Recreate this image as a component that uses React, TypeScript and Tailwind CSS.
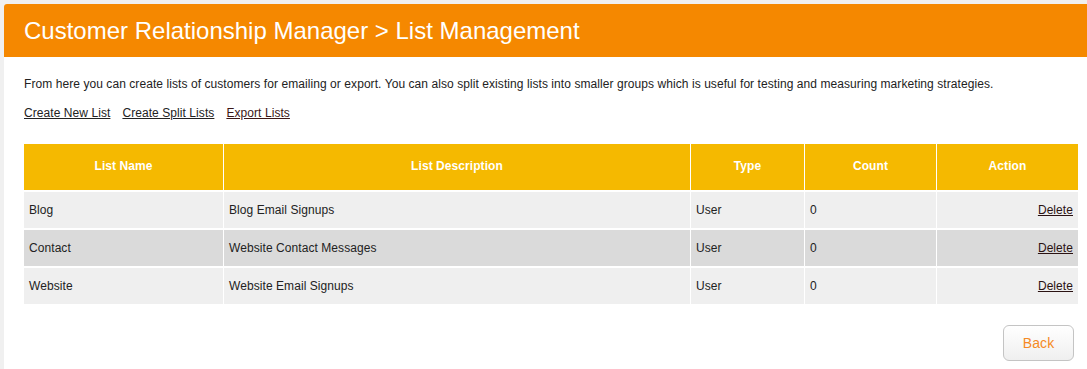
const rows = [
	{ name: "Blog", desc: "Blog Email Signups", type: "User", count: 0 },
	{ name: "Contact", desc: "Website Contact Messages", type: "User", count: 0 },
	{ name: "Website", desc: "Website Email Signups", type: "User", count: 0 },
];

const App = () => (
	<div className="min-h-[369px] bg-[#f0f0f0] pl-[4px] pt-[4px] font-['Liberation_Sans',Arial,sans-serif]">
		<div className="min-h-[365px] rounded-tl-[3px] bg-white">
			<div className="flex h-[53px] items-center rounded-tl-[3px] bg-[#f58800] px-[20px]">
				<h1 className="text-[24px] leading-none text-white">
					Customer Relationship Manager &gt; List Management
				</h1>
			</div>
			<div className="pl-[20px] pr-[9px] tracking-[0.07px]">
				<p className="pt-[20px] text-[12px] leading-[14px] text-[#222]">
					From here you can create lists of customers for emailing or export. You can also split existing lists into smaller groups which is useful for testing and measuring marketing strategies.
				</p>
				<div className="flex gap-[12px] pt-[15px] text-[12px] leading-[14px]">
					<a className="text-[#222] underline">Create New List</a>
					<a className="text-[#222] underline">Create Split Lists</a>
					<a className="text-[#3b1616] underline">Export Lists</a>
				</div>
				<table className="-ml-[1px] mt-[22px] w-[1056px] table-fixed border-separate border-spacing-x-[1px] border-spacing-y-[2px] text-[12px] text-[#222]">
					<colgroup>
						<col className="w-[199px]" />
						<col className="w-[466px]" />
						<col className="w-[113px]" />
						<col className="w-[131px]" />
						<col />
					</colgroup>
					<thead>
						<tr className="h-[46px] bg-[#f5b900] text-white">
							<th className="pb-[2px] font-bold">List Name</th>
							<th className="pb-[2px] font-bold">List Description</th>
							<th className="pb-[2px] font-bold">Type</th>
							<th className="pb-[2px] font-bold">Count</th>
							<th className="pb-[2px] font-bold">Action</th>
						</tr>
					</thead>
					<tbody>
						{rows.map((r, i) => (
							<tr key={r.name} className={`h-[36px] ${i % 2 ? "bg-[#dadada]" : "bg-[#efefef]"}`}>
								<td className="px-[5px] pb-[1px]">{r.name}</td>
								<td className="px-[5px] pb-[1px]">{r.desc}</td>
								<td className="px-[5px] pb-[1px]">{r.type}</td>
								<td className="px-[5px] pb-[1px]">{r.count}</td>
								<td className="px-[5px] pb-[1px] text-right">
									<a className="text-[#2a1212] underline">Delete</a>
								</td>
							</tr>
						))}
					</tbody>
				</table>
				<div className="flex justify-end pr-[4px] pt-[19px]">
					<button className="h-[36px] w-[71px] rounded-[6px] border border-[#c4c4c4] bg-gradient-to-b from-white to-[#efefef] text-[14px] text-[#f58a24]">
						Back
					</button>
				</div>
			</div>
		</div>
	</div>
);

export default App;
